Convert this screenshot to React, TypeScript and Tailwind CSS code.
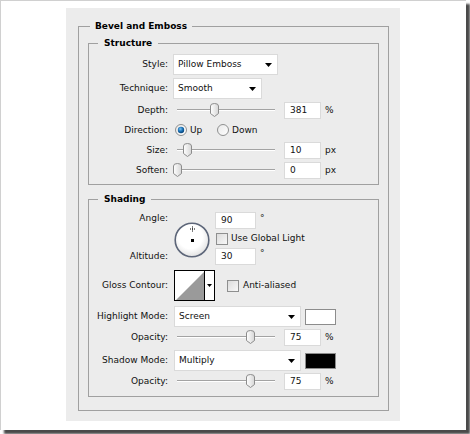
import React from "react";

const Arrow = () => (
  <svg width="7" height="4" viewBox="0 0 7 4">
    <path d="M0 0 H7 L3.5 4 Z" fill="#000" />
  </svg>
);

const Select = ({ value, w }: { value: string; w: string }) => (
  <div className={`${w} h-[21px] bg-white border border-[#dadada] flex items-center justify-between pl-[4px] pr-[5px]`}>
    <span>{value}</span>
    <Arrow />
  </div>
);

const Input = ({ value, w = "w-[37px]" }: { value: string; w?: string }) => (
  <div className={`${w} h-[17px] bg-white border border-[#dadada] flex items-center pl-[5px]`}>{value}</div>
);

const Thumb = () => (
  <svg width="9" height="14" viewBox="0 0 9 14">
    <defs>
      <linearGradient id="tg" x1="0" x2="1" y1="0" y2="0">
        <stop offset="0" stopColor="#ffffff" />
        <stop offset="1" stopColor="#d6d6d6" />
      </linearGradient>
    </defs>
    <path d="M0.5 3 Q0.5 0.5 4.5 0.5 Q8.5 0.5 8.5 3 V10.5 L4.5 13.5 L0.5 10.5 Z" fill="url(#tg)" stroke="#8c8c8c" />
  </svg>
);

// slider track is 98px wide, pos = fraction
const Slider = ({ pos }: { pos: number }) => (
  <div className="relative w-[106px] h-[14px]">
    <div className="absolute left-[4px] top-[6px] w-[98px] h-[2px] border-t border-[#a3a3a3] border-b border-b-white" />
    <div className="absolute top-0" style={{ left: 4 + pos * 98 - 4.5 }}>
      <Thumb />
    </div>
  </div>
);

const Label = ({ text }: { text: string }) => <div className="w-[79px] text-right shrink-0">{text}</div>;

const SliderRow = ({ label, pos, value, unit }: { label: string; pos: number; value: string; unit: string }) => (
  <div className="h-[20px] flex items-center">
    <Label text={label} />
    <div className="ml-[5px]">
      <Slider pos={pos} />
    </div>
    <div className="ml-[5px]">
      <Input value={value} />
    </div>
    <div className="ml-[4px]">{unit}</div>
  </div>
);

const Radio = ({ on }: { on?: boolean }) => (
  <svg width="12" height="12" viewBox="0 0 12 12">
    <defs>
      <radialGradient id="rb" cx="0.4" cy="0.35" r="0.6">
        <stop offset="0" stopColor="#7cc3f0" />
        <stop offset="0.6" stopColor="#1a72b8" />
        <stop offset="1" stopColor="#0c4a80" />
      </radialGradient>
      <linearGradient id="rg" x1="0" x2="1" y1="0" y2="1">
        <stop offset="0" stopColor="#e8e8e8" />
        <stop offset="1" stopColor="#ffffff" />
      </linearGradient>
    </defs>
    <circle cx="6" cy="6" r="5.5" fill="url(#rg)" stroke="#8e8f8f" />
    {on && <circle cx="6" cy="6" r="3.2" fill="url(#rb)" />}
  </svg>
);

const Check = () => (
  <div className="w-[12px] h-[12px] border border-[#8e8f8f] bg-gradient-to-br from-[#dcdcdc] to-[#f8f8f8]" />
);

const Legend = ({ text, ml, px }: { text: string; ml: string; px: string }) => (
  <legend className={`${ml} ${px} font-bold leading-[13px] text-black`}>{text}</legend>
);

export default function App() {
  return (
    <div className="w-[470px] h-[434px] bg-white font-['DejaVu_Sans',sans-serif] text-[9px] text-[#111] leading-[13px]">
      <div className="w-[466px] h-[430px] bg-white border-t border-l border-[#d0d0d0] shadow-[4px_4px_2px_#4a4a4a] pt-[7px] pl-[65px]">
        <div className="w-[334px] h-[413px] bg-[#ececec] pt-[12px] pl-[12px]">
          <fieldset className="w-[311px] border border-[#a0a0a0] px-[9px] pb-[13px]">
            <Legend text="Bevel and Emboss" ml="ml-[2px]" px="px-[5px]" />
            <fieldset className="mt-[4px] w-[291px] border border-[#a0a0a0] pb-[4px]">
              <Legend text="Structure" ml="ml-[9px]" px="px-[6px]" />
              <div className="mt-[4px] flex items-center h-[21px]">
                <Label text="Style:" />
                <div className="ml-[5px]">
                  <Select value="Pillow Emboss" w="w-[105px]" />
                </div>
              </div>
              <div className="mt-[3px] flex items-center h-[21px]">
                <Label text="Technique:" />
                <div className="ml-[5px]">
                  <Select value="Smooth" w="w-[89px]" />
                </div>
              </div>
              <div className="mt-[1px]">
                <SliderRow label="Depth:" pos={0.381} value="381" unit="%" />
              </div>
              <div className="h-[20px] flex items-center">
                <Label text="Direction:" />
                <div className="ml-[7px] w-[42px] flex items-center gap-[3px]">
                  <Radio on />
                  <span>Up</span>
                </div>
                <div className="flex items-center gap-[3px]">
                  <Radio />
                  <span>Down</span>
                </div>
              </div>
              <SliderRow label="Size:" pos={0.108} value="10" unit="px" />
              <SliderRow label="Soften:" pos={0} value="0" unit="px" />
            </fieldset>

            <fieldset className="mt-[8px] w-[291px] border border-[#a0a0a0] pb-[5px]">
              <Legend text="Shading" ml="ml-[9px]" px="px-[6px]" />
              <div className="mt-[6px] flex h-[53px]">
                <div className="w-[79px] shrink-0 flex flex-col justify-between text-right">
                  <div className="h-[17px] leading-[13px]">Angle:</div>
                  <div className="h-[17px] leading-[17px]">Altitude:</div>
                </div>
                <div className="ml-[6px] mt-[10px] w-[36px] h-[36px]">
                  <svg width="36" height="36" viewBox="0 0 36 36">
                    <defs>
                      <radialGradient id="cg" cx="0.45" cy="0.4" r="0.6">
                        <stop offset="0.6" stopColor="#ffffff" />
                        <stop offset="1" stopColor="#e2e2e2" />
                      </radialGradient>
                    </defs>
                    <circle cx="18" cy="18" r="16.8" fill="url(#cg)" stroke="#5d6679" strokeWidth="1.6" />
                    <path d="M18.5 4.5 v5 M16 7 h5" stroke="#000" strokeWidth="1" strokeDasharray="1 1" />
                    <rect x="17" y="17" width="3" height="3" fill="#000" />
                  </svg>
                </div>
                <div className="ml-[5px] flex flex-col">
                  <div className="flex items-start">
                    <Input value="90" w="w-[41px]" />
                    <span className="ml-[4px]">°</span>
                  </div>
                  <div className="mt-[2px] h-[17px] flex items-center gap-[3px] pl-[1px]">
                    <Check />
                    <span>Use Global Light</span>
                  </div>
                  <div className="mt-[2px] flex items-start">
                    <Input value="30" w="w-[41px]" />
                    <span className="ml-[4px] -mt-[1px]">°</span>
                  </div>
                </div>
              </div>

              <div className="mt-[5px] h-[31px] flex items-center">
                <Label text="Gloss Contour:" />
                <div className="ml-[6px] w-[41px] h-[31px] border border-black bg-white flex">
                  <svg width="29" height="29" viewBox="0 0 29 29">
                    <path d="M1 29 L29 1 V29 Z" fill="#9a9a9a" />
                  </svg>
                  <div className="flex-1 border-l border-black flex items-center justify-center">
                    <svg width="5" height="3" viewBox="0 0 5 3">
                      <path d="M0 0 H5 L2.5 3 Z" fill="#000" />
                    </svg>
                  </div>
                </div>
                <div className="ml-[12px] flex items-center gap-[4px]">
                  <Check />
                  <span>Anti-aliased</span>
                </div>
              </div>

              <div className="mt-[5px] h-[21px] flex items-center">
                <Label text="Highlight Mode:" />
                <div className="ml-[6px]">
                  <Select value="Screen" w="w-[127px]" />
                </div>
                <div className="ml-[4px] w-[31px] h-[16px] border border-[#8c8c8c] bg-white" />
              </div>
              <SliderRow label="Opacity:" pos={0.75} value="75" unit="%" />
              <div className="mt-[3px] h-[21px] flex items-center">
                <Label text="Shadow Mode:" />
                <div className="ml-[6px]">
                  <Select value="Multiply" w="w-[127px]" />
                </div>
                <div className="ml-[4px] w-[31px] h-[16px] border border-[#8c8c8c] bg-black" />
              </div>
              <SliderRow label="Opacity:" pos={0.75} value="75" unit="%" />
            </fieldset>
          </fieldset>
        </div>
      </div>
    </div>
  );
}
